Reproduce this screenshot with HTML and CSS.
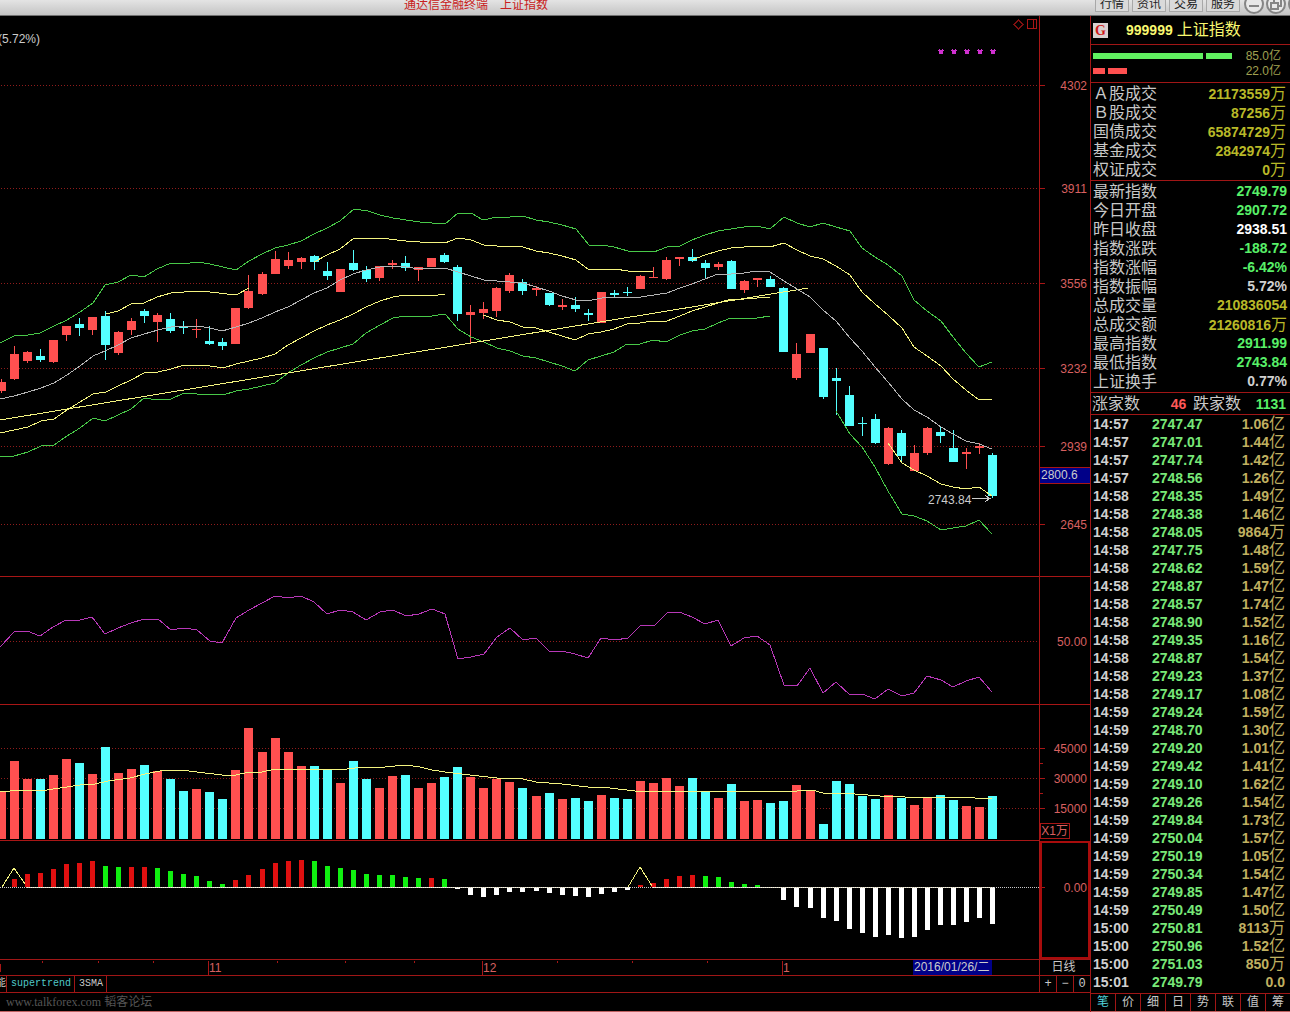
FILE: index.html
```html
<!DOCTYPE html>
<html lang="zh-CN">
<head>
<meta charset="utf-8">
<title>上证指数</title>
<link rel="stylesheet" href="styles.css">
</head>
<body>
<header class="titlebar">
  <h1 class="title"><span>通达信金融终端</span><span>上证指数</span></h1>
  <nav class="menu">
    <button>行情</button><button>资讯</button><button>交易</button><button>服务</button>
  </nav>
  <div class="window-buttons">
    <button aria-label="最小化"><svg width="22" height="22" viewBox="0 0 22 22"><circle cx="11" cy="11" r="9"/><path d="M6 13H16"/></svg></button>
    <button aria-label="还原"><svg width="22" height="22" viewBox="0 0 22 22"><circle cx="11" cy="11" r="9"/><path d="M6 10H13V16H6ZM9 10V6H16V13H13"/></svg></button>
    <button aria-label="关闭"><svg width="22" height="22" viewBox="0 0 22 22"><circle cx="11" cy="11" r="9"/></svg></button>
  </div>
</header>
<div class="workspace">
  <main class="charts">
    <svg class="pane pane-price" viewBox="0 16 1090 560" preserveAspectRatio="xMaxYMin meet">
      <g class="grid"><path d="M-2000 85.5H1039M-2000 188.5H1039M-2000 283.5H1039M-2000 368.5H1039M-2000 446.5H1039M-2000 524.5H1039"/></g>
      <path class="frame" d="M1039.5 16V576M1039 85.5h6M1039 188.5h6M1039 283.5h6M1039 368.5h6M1039 446.5h6M1039 524.5h6"/>
      <g id="candles" class="crisp"></g>
      <g class="lines">
        <polyline class="green" points="0,343 14,336 28,335 40,333 54,326 67,320 80,312 93,303 105,285 118,282 131,275 144,277 157,269 171,263 184,264 197,262 210,264 223,267 236,270 249,261 262,254 275,248 288,245 301,241 314,234 327,228 340,221 354,209 368,211 380,215 393,218 406,220 420,222 432,223 445,224 458,213 471,213 483,220 497,217 510,217 523,216 536,220 549,222 562,225 576,229 589,245 601,245 614,247 628,251 641,251 654,252 667,247 680,246 692,240 705,235 718,231 731,229 744,227 757,226 770,229 784,217 797,223 810,227 823,223 836,227 850,231 862,248 875,257 888,265 902,276 914,300 927,311 941,321 953,337 966,353 979,367 992,362"/>
        <polyline class="green" points="0,457 14,456 28,452 41,446 54,445 67,436 80,428 93,418 105,421 118,415 131,409 144,398 158,400 171,399 184,393 197,394 223,395 236,391 249,389 262,386 275,383 288,373 301,365 314,358 327,352 340,348 353,344 366,333 380,325 393,318 406,316 420,317 432,316 445,314 458,329 471,337 484,342 497,348 510,351 523,356 536,358 549,362 562,366 575,371 588,360 601,356 614,352 627,344 640,344 653,340 666,342 680,335 692,331 705,329 718,323 731,318 744,319 757,318 770,316"/>
        <polyline class="green" points="836,411 850,434 862,447 875,467 888,491 902,514 914,516 927,521 941,530 953,528 966,526 979,520 992,534"/>
        <polyline class="yellow" points="106,314 118,311 131,304 144,303 157,297 171,293 197,291 210,292 236,295 249,288"/>
        <polyline class="yellow" points="314,262 327,255 340,249 354,238 380,238 406,241 420,242 445,243 458,238 471,240 484,245 497,246 523,247 536,251 549,253 562,256 576,260 589,270 615,269 628,271 653,271"/>
        <polyline class="yellow" points="692,260 705,255 718,251 731,248 744,247 757,246 770,247 784,243 797,250 810,256 823,259 836,266 850,275 862,292 875,304 888,315 902,328 914,347 927,356 941,366 953,379 966,390 979,400 992,399"/>
        <polyline class="yellow" points="0,433 14,430 28,427 41,421 54,419 67,410 80,402 93,394 106,392 118,386 131,380 144,373 158,372 171,369 184,365 210,366 223,368 236,364 249,361 262,358 275,354 288,345 301,338 314,331 327,325 340,320 353,314 366,307 380,301 393,297 406,295 432,296 445,294"/>
        <polyline class="yellow" points="483,315 497,320 510,322 523,327 536,328 549,332 562,336 575,340 588,334 601,332 614,329 627,324 640,323 653,321 667,321 680,316 692,311 705,307 718,303 731,299 744,299 757,298 770,297"/>
        <polyline class="yellow" points="888,443 902,463 914,470 927,476 941,484 953,487 966,489 979,487 992,496"/>
        <polyline class="yellow" points="0,420 808,288"/>
        <polyline class="gray" points="0,399 14,396 28,392 41,388 54,383 67,375 80,366 93,356 105,351 118,345 131,338 144,334 158,330 171,327 184,326 197,326 210,328 222,331 236,327 249,323 262,318 275,312 288,307 301,300 314,293 327,288 340,280 353,274 366,270 380,267 393,266 406,267 420,269 445,268 458,272 471,276 484,280 510,282 523,283 536,287 549,291 562,296 576,300 592,300 602,298 615,297 641,297 654,295 667,293 680,288 692,284 705,279 718,274 731,274 744,273 757,271 770,272 784,281 797,289 810,297 823,310 836,321 850,338 862,351 875,367 888,382 902,399 914,410 927,417 941,427 953,434 966,441 979,444 992,449"/>
      </g>
      <path class="marks" d="M939 50l4 4m0-4l-4 4M952 50l4 4m0-4l-4 4M965 50l4 4m0-4l-4 4M978 50l4 4m0-4l-4 4M991 50l4 4m0-4l-4 4"/>
      <path class="frame dim" d="M1018.500 20L1023 24.500L1018.500 29L1014 24.500Z"/>
      <path class="frame" d="M1027.500 19.500H1036.500V28.500H1027.500ZM1033.500 19.500V28.500"/>
      <text class="plain" x="-2" y="43">(5.72%)</text>
      <text class="plain" x="928" y="504">2743.84</text>
      <path class="arrow" d="M972 498.500H990M985 495.500L990 498.500L985 501.500"/>
      <g class="axis">
        <text x="1087" y="90">4302</text><text x="1087" y="193">3911</text><text x="1087" y="288">3556</text>
        <text x="1087" y="373">3232</text><text x="1087" y="451">2939</text><text x="1087" y="529">2645</text>
      </g>
      <rect class="cursor" x="1040" y="467" width="50" height="16"/>
      <path class="frame" d="M1040 467.500H1090M1040 483.500H1090"/>
      <text class="plain" x="1041" y="479">2800.6</text>
    </svg>
    <svg class="pane pane-rsi" viewBox="0 576 1090 128" preserveAspectRatio="xMaxYMin meet">
      <g class="grid"><path d="M-2000 641.500H1039"/></g>
      <path class="frame" d="M-2000 576.500H1090M1039.500 576V704"/>
      <g class="lines"><polyline class="purple" points="0,647 14,632 27,631 40,636 53,627 66,620 80,620 92,617 105,634 118,628 131,623 144,619 158,619 171,630 184,628 197,630 210,641 222,643 236,618 249,610 262,603 275,596 288,598 301,596 314,602 327,614 340,610 353,612 366,620 380,612 393,610 406,616 419,614 432,609 445,614 458,659 471,657 484,654 497,637 510,628 523,640 536,638 549,651 562,651 575,654 588,658 601,638 615,640 628,638 641,625 654,626 667,613 679,612 692,617 705,624 718,620 731,646 744,638 757,636 770,645 784,685 797,686 810,668 823,693 836,682 850,695 862,694 875,699 888,689 902,696 914,693 927,676 941,680 953,687 966,681 979,677 992,692"/></g>
      <g class="axis"><text x="1087" y="646">50.00</text></g>
    </svg>
    <svg class="pane pane-volume" viewBox="0 704 1090 136" preserveAspectRatio="xMaxYMin meet">
      <g class="grid"><path d="M-2000 748.500H1039M-2000 778.500H1039M-2000 808.500H1039"/></g>
      <path class="frame" d="M-2000 704.500H1090M1039.500 704V840M1039 748.500h6M1039 763.500h4M1039 778.500h6M1039 793.500h4M1039 808.500h6"/>
      <g id="volume" class="crisp"></g>
      <g class="lines"><polyline class="yellow" points="0,792 20,790 40,791 60,788 80,785 95,784 108,781 130,778 145,774 160,771 180,770 197,772 222,775 236,775 249,772 262,772 275,769 325,769 340,770 362,767 385,767 406,765 420,767 432,770 445,772 470,775 497,778 523,779 536,782 562,784 588,787 610,788 635,791 775,791 785,792 797,791 812,790 823,793 855,794 880,796 905,797 935,798 955,797 975,798 992,799"/></g>
      <g class="axis"><text x="1087" y="753">45000</text><text x="1087" y="783">30000</text><text x="1087" y="813">15000</text><text x="1068" y="835">X1万</text></g>
      <path class="frame" d="M1040.500 823.500H1069.500V838.500H1040.500Z"/>
    </svg>
    <svg class="pane pane-macd" viewBox="0 840 1090 119" preserveAspectRatio="xMaxYMin meet">
      <path class="frame" d="M-2000 840.500H1040M1039.500 840V959M1040 887.500h5"/>
      <rect class="selected" x="1041" y="842" width="48" height="116"/>
      <g id="macd" class="crisp"></g>
      <path class="zero" d="M26 887.500H628M652 887.500H992"/>
      <path class="zero dots" d="M0 887.500H1039"/>
      <g class="lines"><polyline class="yellow" points="2,887 14,868 25,884"/><polyline class="yellow" points="628,887 640,867 652,886"/></g>
      <g class="axis"><text x="1087" y="892">0.00</text></g>
    </svg>
    <div class="dates">
      <svg class="timeline" viewBox="0 959 1039 16" preserveAspectRatio="xMaxYMin meet">
        <path class="frame" d="M42.500 960v2M98.500 960v2M153.500 960v2M277.500 960v2M345.500 960v2M414.500 960v2M557.500 960v2M632.500 960v2M707.500 960v2M208.500 960v16M482.500 960v16M782.500 960v16M.5 963v8"/>
        <g class="axis start"><text x="209" y="971">11</text><text x="483" y="971">12</text><text x="783" y="971">1</text></g>
        <rect class="cursor" x="913" y="959" width="79" height="15"/>
        <text class="plain" x="914" y="970">2016/01/26/二</text>
      </svg>
      <button class="period">日线</button>
    </div>
    <div class="indicators">
      <button class="ind cut">能</button><button class="ind active">supertrend</button><button class="ind">3SMA</button>
      <div class="zoom"><button>+</button><button>−</button><button>0</button></div>
    </div>
    <footer class="watermark">www.talkforex.com 韬客论坛</footer>
  </main>
  <aside class="quote">
    <h2 class="name"><span class="badge">G</span><b>999999</b><span>上证指数</span></h2>
    <div class="orders">
      <div class="order up"><i class="wide"></i><i class="mid"></i><span>85.0亿</span></div>
      <div class="order down"><i class="short"></i><i class="small"></i><span>22.0亿</span></div>
    </div>
    <table class="stats turnover">
      <tbody>
      <tr><th>Ａ股成交</th><td>21173559<span>万</span></td></tr>
      <tr><th>Ｂ股成交</th><td>87256<span>万</span></td></tr>
      <tr><th>国债成交</th><td>65874729<span>万</span></td></tr>
      <tr><th>基金成交</th><td>2842974<span>万</span></td></tr>
      <tr><th>权证成交</th><td>0<span>万</span></td></tr>
      </tbody>
    </table>
    <table class="stats">
      <tbody>
      <tr><th>最新指数</th><td class="fall">2749.79</td></tr>
      <tr><th>今日开盘</th><td class="fall">2907.72</td></tr>
      <tr><th>昨日收盘</th><td class="flat">2938.51</td></tr>
      <tr><th>指数涨跌</th><td class="fall">-188.72</td></tr>
      <tr><th>指数涨幅</th><td class="fall">-6.42%</td></tr>
      <tr><th>指数振幅</th><td class="soft">5.72%</td></tr>
      <tr><th>总成交量</th><td>210836054</td></tr>
      <tr><th>总成交额</th><td>21260816<span>万</span></td></tr>
      <tr><th>最高指数</th><td class="fall">2911.99</td></tr>
      <tr><th>最低指数</th><td class="fall">2743.84</td></tr>
      <tr><th>上证换手</th><td class="soft">0.77%</td></tr>
      </tbody>
    </table>
    <div class="breadth"><span>涨家数</span><b class="rise">46</b><span>跌家数</span><b class="fall">1131</b></div>
    <table class="ticks">
      <tbody>
      <tr><td>14:57</td><td>2747.47</td><td>1.06<span>亿</span></td></tr>
      <tr><td>14:57</td><td>2747.01</td><td>1.44<span>亿</span></td></tr>
      <tr><td>14:57</td><td>2747.74</td><td>1.42<span>亿</span></td></tr>
      <tr><td>14:57</td><td>2748.56</td><td>1.26<span>亿</span></td></tr>
      <tr><td>14:58</td><td>2748.35</td><td>1.49<span>亿</span></td></tr>
      <tr><td>14:58</td><td>2748.38</td><td>1.46<span>亿</span></td></tr>
      <tr><td>14:58</td><td>2748.05</td><td>9864<span>万</span></td></tr>
      <tr><td>14:58</td><td>2747.75</td><td>1.48<span>亿</span></td></tr>
      <tr><td>14:58</td><td>2748.62</td><td>1.59<span>亿</span></td></tr>
      <tr><td>14:58</td><td>2748.87</td><td>1.47<span>亿</span></td></tr>
      <tr><td>14:58</td><td>2748.57</td><td>1.74<span>亿</span></td></tr>
      <tr><td>14:58</td><td>2748.90</td><td>1.52<span>亿</span></td></tr>
      <tr><td>14:58</td><td>2749.35</td><td>1.16<span>亿</span></td></tr>
      <tr><td>14:58</td><td>2748.87</td><td>1.54<span>亿</span></td></tr>
      <tr><td>14:58</td><td>2749.23</td><td>1.37<span>亿</span></td></tr>
      <tr><td>14:58</td><td>2749.17</td><td>1.08<span>亿</span></td></tr>
      <tr><td>14:59</td><td>2749.24</td><td>1.59<span>亿</span></td></tr>
      <tr><td>14:59</td><td>2748.70</td><td>1.30<span>亿</span></td></tr>
      <tr><td>14:59</td><td>2749.20</td><td>1.01<span>亿</span></td></tr>
      <tr><td>14:59</td><td>2749.42</td><td>1.41<span>亿</span></td></tr>
      <tr><td>14:59</td><td>2749.10</td><td>1.62<span>亿</span></td></tr>
      <tr><td>14:59</td><td>2749.26</td><td>1.54<span>亿</span></td></tr>
      <tr><td>14:59</td><td>2749.84</td><td>1.73<span>亿</span></td></tr>
      <tr><td>14:59</td><td>2750.04</td><td>1.57<span>亿</span></td></tr>
      <tr><td>14:59</td><td>2750.19</td><td>1.05<span>亿</span></td></tr>
      <tr><td>14:59</td><td>2750.34</td><td>1.54<span>亿</span></td></tr>
      <tr><td>14:59</td><td>2749.85</td><td>1.47<span>亿</span></td></tr>
      <tr><td>14:59</td><td>2750.49</td><td>1.50<span>亿</span></td></tr>
      <tr><td>15:00</td><td>2750.81</td><td>8113<span>万</span></td></tr>
      <tr><td>15:00</td><td>2750.96</td><td>1.52<span>亿</span></td></tr>
      <tr><td>15:00</td><td>2751.03</td><td>850<span>万</span></td></tr>
      <tr><td>15:01</td><td>2749.79</td><td>0.0</td></tr>
      </tbody>
    </table>
    <nav class="tabs"><button class="active">笔</button><button>价</button><button>细</button><button>日</button><button>势</button><button>联</button><button>值</button><button>筹</button></nav>
  </aside>
</div>
<script src="chart.js"></script>
</body>
</html>
```
FILE: styles.css
```css
* { box-sizing: border-box; }
body {
  margin: 0;
  background: #000;
  color: #c8c8c8;
  font: 12px/16px "Liberation Sans", "Noto Sans CJK SC", sans-serif;
  overflow-x: hidden;
}
button {
  margin: 0;
  padding: 0;
  border: 0;
  background: none;
  color: inherit;
  font: inherit;
}
h1, h2 { margin: 0; font: inherit; }

.titlebar {
  display: flex;
  align-items: flex-end;
  height: 16px;
  overflow: hidden;
  background: linear-gradient(#e4e4e4, #c4c4c4);
  border-bottom: 1px solid #707070;
}
.title {
  flex: 1;
  display: flex;
  justify-content: center;
  gap: 12px;
  padding-bottom: 2px;
  margin-right: 143px;
  color: #c82020;
}
.menu { display: flex; gap: 3px; padding-bottom: 3px; }
.menu button {
  width: 34px;
  height: 16px;
  border: 1px solid #a8a8a8;
  background: #dadada;
  color: #222;
  line-height: 14px;
}
.window-buttons { display: flex; width: 50px; padding-left: 3px; overflow: hidden; }
.window-buttons button { height: 22px; flex: none; }
.window-buttons svg { display: block; fill: #e8e8e8; stroke: #858585; stroke-width: 2; }
.window-buttons path { fill: none; }

.workspace { display: flex; }
.charts { flex: 1; min-width: 0; border-bottom: 1px solid #c06060; }
.pane, .timeline { display: block; width: 100%; overflow: hidden; }
.pane-price { height: 560px; }
.pane-rsi { height: 128px; }
.pane-volume { height: 136px; }
.pane-macd { height: 119px; }
.crisp, .frame, .grid, .lines, .arrow, .zero, .marks { shape-rendering: crispEdges; }
.frame { fill: none; stroke: #a81616; }
.dim { stroke: #801010; }
.grid { stroke: #901c1c; stroke-dasharray: 1 2; }
.lines { fill: none; }
.green { stroke: #48c848; }
.yellow { stroke: #f4f480; }
.gray { stroke: #b4b4b4; }
.purple { stroke: #b838b8; }
.marks { stroke: #d030d0; stroke-width: 2; }
.arrow { fill: none; stroke: #ccc; }
.plain { fill: #ccc; }
.axis { fill: #d86060; text-anchor: end; }
.start { text-anchor: start; }
.cursor { fill: #000088; }
.selected { fill: none; stroke: #a80c0c; stroke-width: 2; }
.zero { stroke: #fff8d8; }
.dots { stroke: #c8c8c8; stroke-dasharray: 1 1; }
.up-bar { fill: #ff5050; }
.down-bar { fill: #54ffff; }
.macd-r { fill: #e01010; }
.macd-g { fill: #10f010; }
.macd-w { fill: #fff; }

.dates, .indicators { display: flex; border-top: 1px solid #a01616; }
.dates { height: 16px; overflow: hidden; }
.timeline { flex: 1; min-width: 0; height: 16px; }
.period { width: 51px; border-left: 1px solid #a01616; padding-right: 3px; line-height: 15px; }
.indicators { height: 17px; font: 10px/16px "Liberation Mono", "Noto Sans CJK SC", monospace; }
.ind { padding: 0 3px 0 4px; border-right: 1px solid #a01616; }
.ind.cut { width: 7px; padding: 0; direction: rtl; overflow: hidden; }
.ind.active { color: #50c8c8; }
.zoom { display: flex; margin-left: auto; width: 51px; border-left: 1px solid #a01616; }
.zoom button { flex: 1; font-size: 12px; }
.zoom button + button { border-left: 1px solid #a01616; }
.watermark {
  height: 19px;
  padding-left: 6px;
  border-top: 1px solid #a01616;
  color: #555;
  font: 12px/18px "Liberation Serif", "Noto Sans CJK SC", serif;
}

.quote { width: 200px; border-left: 1px solid #a01616; font-size: 14px; }
.name {
  display: flex;
  align-items: center;
  height: 29px;
  padding-left: 2px;
  border-bottom: 1px solid #a01616;
  color: #f8f870;
  font-size: 16px;
}
.name b { margin: 0 4px 0 18px; font-size: 14px; }
.badge {
  width: 15px;
  height: 15px;
  background: #d8d0d0;
  color: #d01818;
  font: bold 14px/15px "Liberation Serif", serif;
  text-align: center;
}
.orders { height: 38px; padding: 3px 9px 0 2px; border-bottom: 1px solid #a01616; }
.order { display: flex; align-items: center; gap: 3px; height: 15px; font-size: 12px; color: #a0a050; }
.order span { margin-left: auto; }
.order i { height: 6px; background: #60f060; }
.down i { background: #ff5050; }
.wide { width: 110px; }
.mid { width: 26px; }
.short { width: 12px; }
.small { width: 19px; }
table { width: 100%; border-collapse: collapse; }
th, td { padding: 0; }
.stats { display: block; padding: 1px 3px 1px 2px; border-bottom: 1px solid #a01616; }
.turnover { padding-right: 4px; }
.stats tbody { display: block; }
.stats tr { display: flex; justify-content: space-between; height: 19px; line-height: 19px; }
.stats th { font-weight: normal; font-size: 16px; }
.stats td { color: #b8b828; font-weight: bold; }
.stats span, .ticks span { font-size: 16px; font-weight: normal; }
.stats .fall, .fall { color: #58f068; }
.stats .flat { color: #fff; }
.stats .soft { color: #d0d0d0; }
.rise { color: #ff5858; }
.breadth {
  display: flex;
  justify-content: space-between;
  height: 22px;
  padding: 0 4px 0 1px;
  border-bottom: 1px solid #a01616;
  font-size: 16px;
  line-height: 22px;
}
.breadth b { font-size: 14px; }
.breadth .rise { margin-left: 24px; }
.breadth .fall { margin-left: 8px; }
.ticks { display: block; padding: 0 5px 2px 2px; border-bottom: 1px solid #a01616; font-weight: bold; }
.ticks tbody { display: block; }
.ticks tr { display: flex; height: 18px; line-height: 18px; }
.ticks td:nth-child(1) { width: 59px; color: #d0d0d0; }
.ticks td:nth-child(2) { width: 60px; color: #78e878; }
.ticks td:nth-child(3) { flex: 1; text-align: right; color: #c0b060; white-space: nowrap; }
.tabs { display: flex; height: 18px; border-bottom: 1px solid #c06060; }
.tabs button { flex: 1; font-size: 12px; line-height: 17px; }
.tabs button + button { border-left: 1px solid #a01616; }
.tabs .active { color: #50d0d8; }
.indicators + .watermark { height: 19px; margin-bottom: 0; }
```
FILE: chart.js
```js
// Direction, then high, body top, body bottom, low (y), then volume top (y).
const days = `r 379 382 391 393 792
r 346 354 379 380 761
r 351 352 361 363 779
c 349 356 360 362 779
r 340 340 362 363 775
r 326 326 335 341 759
c 318 324 328 336 763
r 317 317 330 335 774
c 311 316 345 360 747
r 331 332 353 355 773
r 318 321 330 335 769
c 309 311 316 323 765
r 313 315 322 342 771
c 313 319 331 333 779
c 321 326 328 334 791
r 319 329 330 338 789
c 326 341 344 345 792
c 338 342 346 350 799
r 308 308 344 344 770
r 275 291 308 309 728
r 272 274 294 295 752
r 251 259 274 274 738
r 252 260 266 269 752
r 257 258 262 269 766
c 255 256 262 270 766
c 262 271 276 280 769
r 269 269 292 292 783
c 250 263 270 271 761
c 266 270 279 282 779
r 266 266 278 281 788
r 260 263 265 269 776
c 256 263 268 271 775
r 267 267 270 281 788
r 258 258 267 267 783
c 253 255 262 263 777
c 265 267 314 321 767
r 305 312 315 343 777
r 302 309 313 319 788
r 287 288 311 317 779
r 273 275 291 293 782
c 279 282 291 295 788
r 286 288 290 296 796
c 293 293 305 306 793
r 299 305 307 310 799
c 297 305 309 312 798
c 309 313 315 321 801
r 292 292 323 323 795
c 290 293 295 298 798
c 287 292 293 296 799
r 275 276 289 289 781
r 267 277 278 278 783
r 257 260 279 280 778
r 257 257 259 266 786
c 249 257 261 262 778
c 260 263 268 278 791
r 262 264 267 270 798
c 260 261 289 289 784
r 280 281 290 293 801
r 278 278 280 287 800
c 276 279 287 287 803
c 287 288 352 352 801
r 343 354 378 380 785
r 334 334 353 353 790
c 348 348 397 399 824
c 368 378 381 415 781
c 386 395 426 426 784
c 417 423 424 436 796
c 414 419 443 444 799
r 427 428 464 465 795
c 430 433 456 461 798
r 445 453 471 471 805
r 427 428 453 455 798
c 426 432 436 443 795
c 430 448 462 462 800
r 448 452 454 469 806
r 443 446 448 454 807
c 453 455 496 498 796`.split("\n").map(row => row.split(" "));

// Histogram bar ends, one per day starting with the second one.
const macd = "r879 r874 r873 r869 r864 r863 r861 g866 g867 r867 r867 g868 g871 g874 g876 g881 g884 r880 r875 r869 r863 r861 r860 g861 g866 g868 g870 g874 g875 g875 g877 g878 r878 g879 w889 w895 w897 w895 w892 w892 w891 w893 w895 w896 w897 w894 w892 w890 r885 r883 r879 r876 r875 g876 g877 g882 g884 g885 w887 w900 w907 w908 w918 w921 w929 w933 w937 w935 w938 w937 w930 w925 w925 w922 w918 w924".split(" ");

const left = k => 10 + 13 * k + Math.floor((k + 2) / 21);
const bar = (cls, x, top, width, bottom) =>
  `<rect class="${cls}" x="${x}" y="${top}" width="${width}" height="${Math.max(bottom - top, 1)}"/>`;

let candles = "";
let volume = "";
days.forEach(([dir, high, top, bottom, low, vol], i) => {
  const x = left(i - 1);
  const cls = dir === "r" ? "up-bar" : "down-bar";
  candles += bar(cls, x + 4, +high, 1, +low) + bar(cls, x, +top, 9, +bottom);
  volume += bar(cls, x, +vol, 9, 839);
});
document.getElementById("candles").innerHTML = candles;
document.getElementById("volume").innerHTML = volume;
document.getElementById("macd").innerHTML = macd.map((item, k) => {
  const y = +item.slice(1);
  return bar("macd-" + item[0], left(k) + 2, Math.min(y, 887), 5, Math.max(y, 887));
}).join("");
```
